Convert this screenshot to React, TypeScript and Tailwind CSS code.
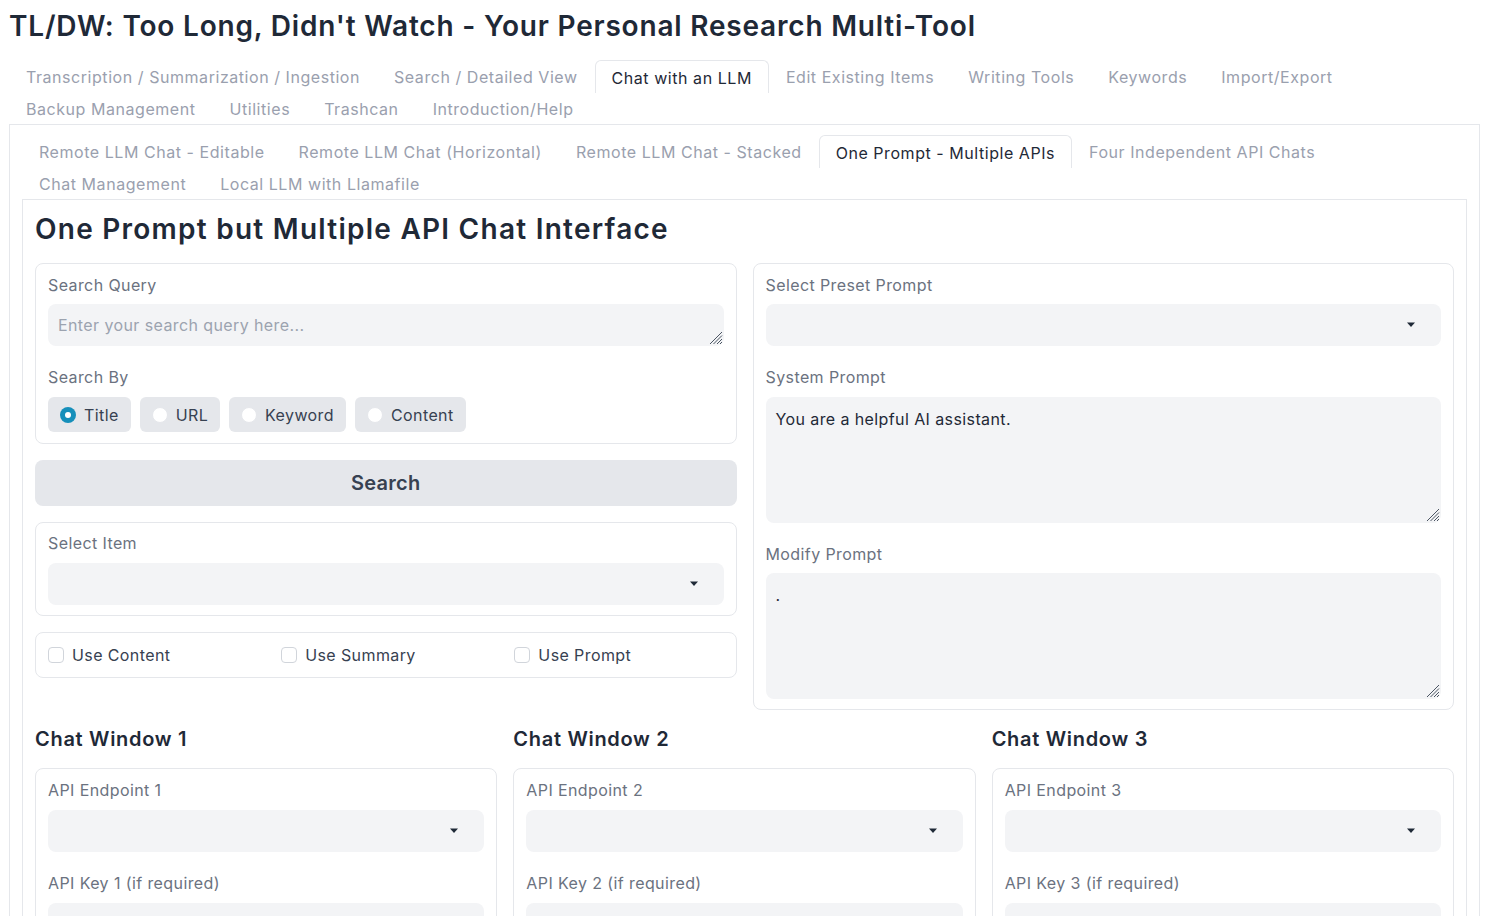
import React from 'react';

const font = { fontFamily: 'Inter, "Noto Sans", sans-serif' };

const topTabs = [
  ['Transcription / Summarization / Ingestion', 'Search / Detailed View', 'Chat with an LLM', 'Edit Existing Items', 'Writing Tools', 'Keywords', 'Import/Export'],
  ['Backup Management', 'Utilities', 'Trashcan', 'Introduction/Help'],
];

const subTabs = [
  ['Remote LLM Chat - Editable', 'Remote LLM Chat (Horizontal)', 'Remote LLM Chat - Stacked', 'One Prompt - Multiple APIs', 'Four Independent API Chats'],
  ['Chat Management', 'Local LLM with Llamafile'],
];

function TabRows({ rows, active }: { rows: string[][]; active: string }) {
  return (
    <div className="flex flex-col">
      {rows.map((row, i) => (
        <div key={i} className="flex h-8 items-stretch">
          {row.map((t) =>
            t === active ? (
              <div
                key={t}
                className="-mb-px flex items-center rounded-t-md border border-b-0 border-[#e5e7eb] bg-white px-4 pt-[2px] text-[16px] tracking-[0.55px] text-[#1f2937]"
              >
                {t}
              </div>
            ) : (
              <div key={t} className="flex items-center px-[17px] pt-[2px] text-[16px] tracking-[0.55px] text-[#9aa0ae]">
                {t}
              </div>
            )
          )}
        </div>
      ))}
    </div>
  );
}

function Label({ children }: { children: React.ReactNode }) {
  return <div className="h-5 text-[16px] leading-5 tracking-[0.4px] text-[#6b7280]">{children}</div>;
}

function Caret() {
  return (
    <svg width="10" height="6" viewBox="0 0 10 6" className="fill-[#1f2937]">
      <path d="M1 0.5h8L5 5z" />
    </svg>
  );
}

function Grip() {
  return (
    <svg width="14" height="14" viewBox="0 0 14 14" className="absolute bottom-[1px] right-[1px] stroke-[#4b5563]">
      <path d="M13 1L1 13M13 4.5L4.5 13M13 8L8 13M13 11L11 13" strokeWidth="1" fill="none" />
    </svg>
  );
}

function Dropdown() {
  return (
    <div className="flex h-[42px] items-center justify-end rounded-lg bg-[#f3f4f6] pr-[25px]">
      <Caret />
    </div>
  );
}

function Radio({ label, checked }: { label: string; checked?: boolean }) {
  return (
    <div className="flex h-[35px] items-center gap-2 rounded-md bg-[#e5e7eb] px-3 text-[16px] tracking-[0.4px] text-[#374151]">
      {checked ? (
        <span className="flex h-4 w-4 items-center justify-center rounded-full bg-[#168fba]">
          <span className="h-[6px] w-[6px] rounded-full bg-white" />
        </span>
      ) : (
        <span className="h-4 w-4 rounded-full border border-[#e5e7eb] bg-white" />
      )}
      {label}
    </div>
  );
}

function Check({ label }: { label: string }) {
  return (
    <div className="flex items-center gap-2 pl-3 text-[16px] tracking-[0.4px] text-[#374151]">
      <span className="h-4 w-4 rounded-[4px] border border-[#d1d5db] bg-white" />
      {label}
    </div>
  );
}

function ChatWindow({ n }: { n: number }) {
  return (
    <div className="flex flex-col">
      <div className="flex h-[26px] items-center text-[20px] font-semibold tracking-[0.7px] text-[#1f2937]">Chat Window {n}</div>
      <div className="mt-[16px] h-[200px] rounded-lg border border-[#e5e7eb] px-3 pt-[11px]">
        <Label>API Endpoint {n}</Label>
        <div className="mt-[10px]">
          <Dropdown />
        </div>
        <div className="mt-[21px]">
          <Label>API Key {n} (if required)</Label>
        </div>
        <div className="mt-[10px] h-[42px] rounded-lg bg-[#f3f4f6]" />
      </div>
    </div>
  );
}

export default function App() {
  return (
    <div className="min-h-screen bg-white pl-[9px] pr-[7px]" style={font}>
      <h1 className="mt-2 h-9 text-[28px] font-semibold leading-9 tracking-[0.8px] text-[#1f2937]">
        TL/DW: Too Long, Didn't Watch - Your Personal Research Multi-Tool
      </h1>
      <div className="mt-4">
        <TabRows rows={topTabs} active="Chat with an LLM" />
      </div>
      <div className="border border-[#e5e7eb] px-3 pt-[10px]">
        <TabRows rows={subTabs} active="One Prompt - Multiple APIs" />
        <div className="border border-[#e5e7eb] px-3 pt-[11px]">
          <h2 className="h-9 text-[28px] font-semibold leading-9 tracking-[1.25px] text-[#1f2937]">
            One Prompt but Multiple API Chat Interface
          </h2>
          <div className="mt-4 grid grid-cols-2 gap-4">
            <div className="flex flex-col gap-4">
              <div className="rounded-lg border border-[#e5e7eb] px-3 pb-[11px] pt-[11px]">
                <Label>Search Query</Label>
                <div className="relative mt-[9px] flex h-[42px] items-center rounded-lg bg-[#f3f4f6] px-[10px] text-[16px] tracking-[0.4px] text-[#9ca3af]">
                  Enter your search query here...
                  <Grip />
                </div>
                <div className="mt-[21px]">
                  <Label>Search By</Label>
                </div>
                <div className="mt-[10px] flex gap-[9px]">
                  <Radio label="Title" checked />
                  <Radio label="URL" />
                  <Radio label="Keyword" />
                  <Radio label="Content" />
                </div>
              </div>
              <div className="flex h-[46px] items-center justify-center rounded-lg bg-[#e5e7eb] text-[20px] font-semibold tracking-[0.3px] text-[#374151]">
                Search
              </div>
              <div className="rounded-lg border border-[#e5e7eb] px-3 pb-[10px] pt-[10px]">
                <Label>Select Item</Label>
                <div className="mt-[10px]">
                  <Dropdown />
                </div>
              </div>
              <div className="grid h-[46px] grid-cols-3 items-center rounded-lg border border-[#e5e7eb]">
                <Check label="Use Content" />
                <Check label="Use Summary" />
                <Check label="Use Prompt" />
              </div>
            </div>
            <div className="h-[447px] rounded-lg border border-[#e5e7eb] px-3 pt-[11px]">
              <Label>Select Preset Prompt</Label>
              <div className="mt-[9px]">
                <Dropdown />
              </div>
              <div className="mt-[21px]">
                <Label>System Prompt</Label>
              </div>
              <div className="relative mt-[10px] h-[126px] rounded-lg bg-[#f3f4f6] px-[10px] pt-[10px] text-[16px] tracking-[0.4px] text-[#1f2937]">
                You are a helpful AI assistant.
                <Grip />
              </div>
              <div className="mt-[21px]">
                <Label>Modify Prompt</Label>
              </div>
              <div className="relative mt-[9px] h-[126px] rounded-lg bg-[#f3f4f6] px-[10px] pt-[10px] text-[16px] text-[#1f2937]">
                .
                <Grip />
              </div>
            </div>
          </div>
          <div className="mt-[16px] grid grid-cols-3 gap-4">
            <ChatWindow n={1} />
            <ChatWindow n={2} />
            <ChatWindow n={3} />
          </div>
        </div>
      </div>
    </div>
  );
}
